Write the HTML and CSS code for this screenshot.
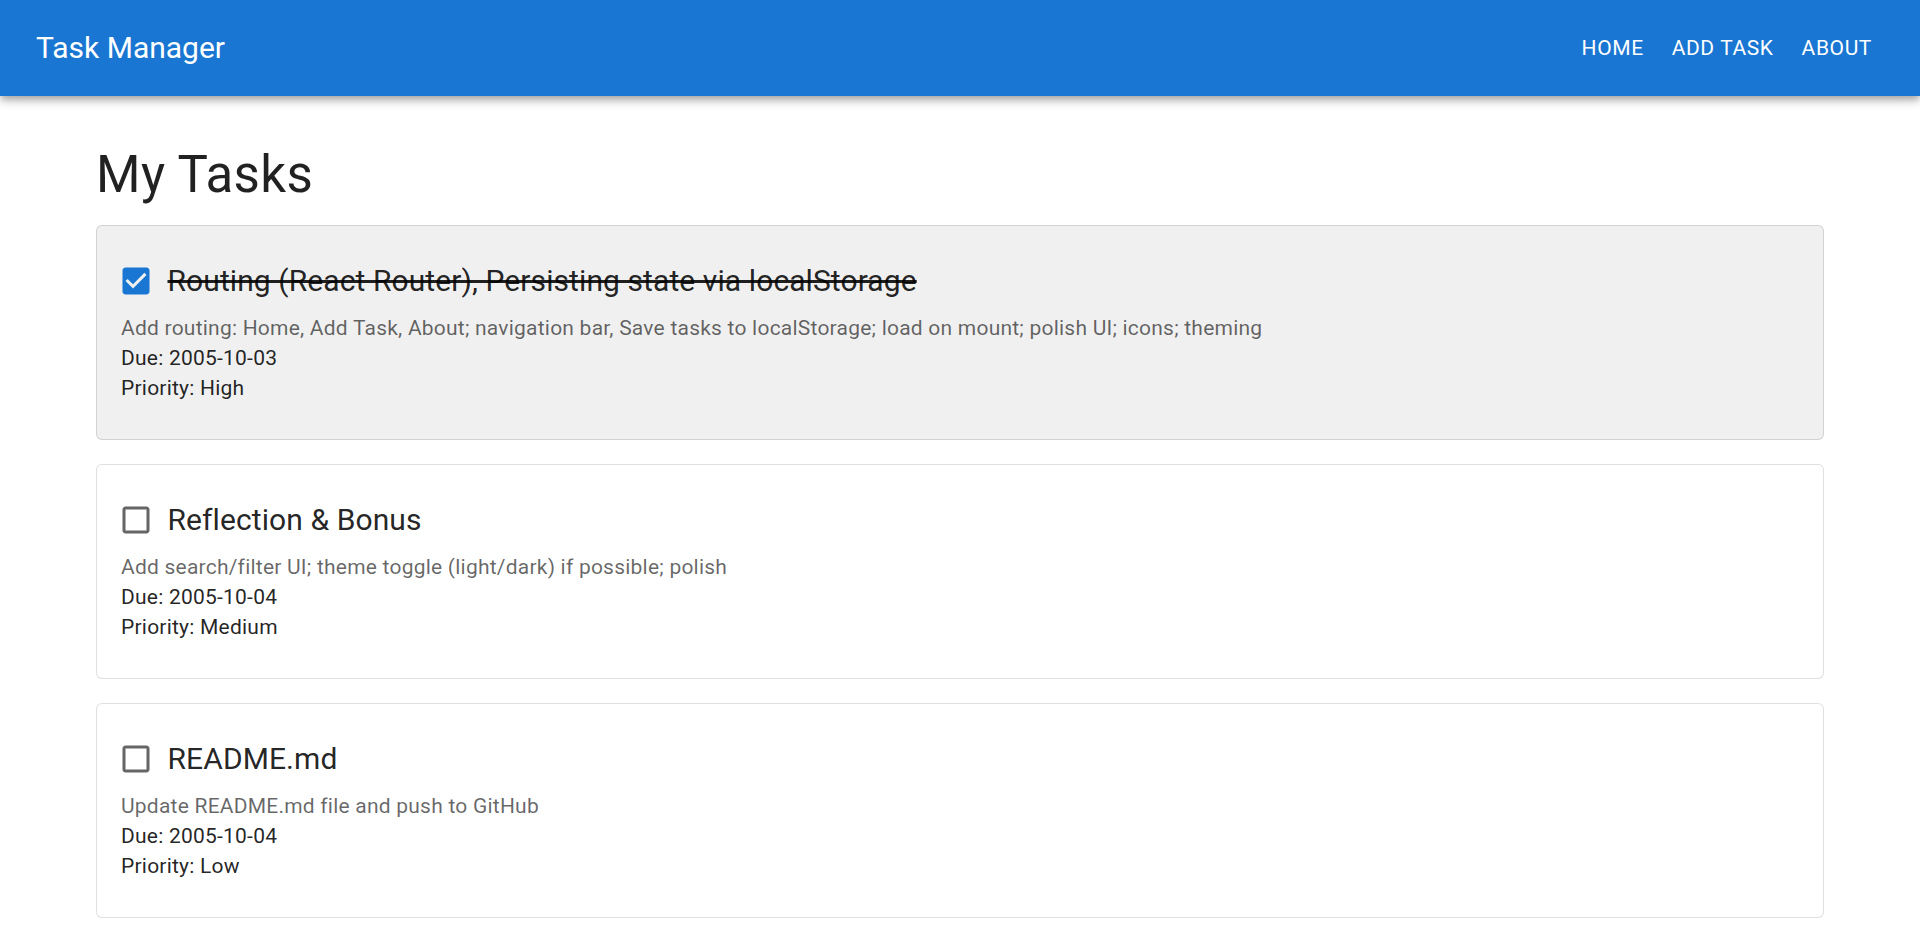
FILE: index.html
```html
<!DOCTYPE html>
<html lang="en">
<head>
<meta charset="utf-8">
<title>Task Manager</title>
<link rel="stylesheet" href="styles.css">
</head>
<body>
<header class="appbar">
  <div class="toolbar">
    <div class="brand">Task Manager</div>
    <nav class="nav">
      <a class="nav-btn" href="#">Home</a>
      <a class="nav-btn" href="#">Add Task</a>
      <a class="nav-btn" href="#">About</a>
    </nav>
  </div>
</header>
<main class="container">
  <h1 class="page-title">My Tasks</h1>

  <section class="card card-done">
    <label class="task-row">
      <span class="cb cb-checked">
        <svg viewBox="0 0 24 24"><path d="M19 3H5c-1.11 0-2 .9-2 2v14c0 1.1.89 2 2 2h14c1.11 0 2-.9 2-2V5c0-1.1-.89-2-2-2zm-9 14l-5-5 1.41-1.41L10 14.17l7.59-7.59L19 8l-9 9z"/></svg>
      </span>
      <span class="task-title done">Routing (React Router), Persisting state via localStorage</span>
    </label>
    <p class="desc">Add routing: Home, Add Task, About; navigation bar, Save tasks to localStorage; load on mount; polish UI; icons; theming</p>
    <p class="meta">Due: 2005-10-03</p>
    <p class="meta">Priority: High</p>
  </section>

  <section class="card">
    <label class="task-row">
      <span class="cb">
        <svg viewBox="0 0 24 24"><path d="M19 5v14H5V5h14m0-2H5c-1.11 0-2 .9-2 2v14c0 1.1.89 2 2 2h14c1.1 0 2-.9 2-2V5c0-1.1-.9-2-2-2z"/></svg>
      </span>
      <span class="task-title">Reflection &amp; Bonus</span>
    </label>
    <p class="desc">Add search/filter UI; theme toggle (light/dark) if possible; polish</p>
    <p class="meta">Due: 2005-10-04</p>
    <p class="meta">Priority: Medium</p>
  </section>

  <section class="card">
    <label class="task-row">
      <span class="cb">
        <svg viewBox="0 0 24 24"><path d="M19 5v14H5V5h14m0-2H5c-1.11 0-2 .9-2 2v14c0 1.1.89 2 2 2h14c1.1 0 2-.9 2-2V5c0-1.1-.9-2-2-2z"/></svg>
      </span>
      <span class="task-title">README.md</span>
    </label>
    <p class="desc">Update README.md file and push to GitHub</p>
    <p class="meta">Due: 2005-10-04</p>
    <p class="meta">Priority: Low</p>
  </section>
</main>
</body>
</html>
```

FILE: styles.css
```css
* { box-sizing: border-box; }
html, body { margin: 0; padding: 0; }
body {
  font-family: Roboto, "Liberation Sans", Arial, sans-serif;
  background: #fff;
  color: rgba(0,0,0,0.87);
}
.appbar {
  background: #1976d2;
  color: #fff;
  box-shadow: 0 3px 6px -1.5px rgba(0,0,0,0.2), 0 6px 7.5px 0 rgba(0,0,0,0.14), 0 1.5px 15px 0 rgba(0,0,0,0.12);
  position: relative;
  z-index: 2;
}
.toolbar {
  height: 96px;
  display: flex;
  align-items: center;
  padding: 0 36px;
}
.brand {
  flex: 1;
  font-size: 30px;
  font-weight: 400;
  line-height: 1.6;
}
.nav { display: flex; align-items: center; gap: 4px; }
.nav-btn {
  color: #fff;
  text-decoration: none;
  text-transform: uppercase;
  font-size: 21px;
  font-weight: 400;
  letter-spacing: 0.02857em;
  line-height: 1.75;
  padding: 9px 12px;
  border-radius: 6px;
}
.container {
  max-width: 1800px;
  margin: 0 auto;
  padding: 0 36px;
}
.page-title {
  margin: 48px 0 17.85px;
  font-size: 51px;
  font-weight: 400;
  line-height: 1.235;
  letter-spacing: 0.00735em;
}
.card {
  border: 1px solid rgba(0,0,0,0.12);
  border-radius: 6px;
  background: #fff;
  padding: 24px 24px 36px;
  margin-bottom: 24px;
}
.card-done { background: #f0f0f0; }
.task-row {
  display: flex;
  align-items: center;
  margin-left: -16.5px;
  cursor: pointer;
}
.cb {
  display: inline-flex;
  padding: 13.5px;
}
.cb svg {
  width: 36px;
  height: 36px;
  fill: rgba(0,0,0,0.6);
}
.cb-checked svg { fill: #1976d2; }
.task-title {
  font-size: 30px;
  font-weight: 400;
  line-height: 1.6;
  letter-spacing: 0.003em;
}
.task-title.done { text-decoration: line-through; }
.desc, .meta {
  margin: 0;
  font-size: 21px;
  line-height: 30px;
  letter-spacing: 0.01071em;
}
.desc { color: rgba(0,0,0,0.6); }
.meta { color: rgba(0,0,0,0.87); }
```
